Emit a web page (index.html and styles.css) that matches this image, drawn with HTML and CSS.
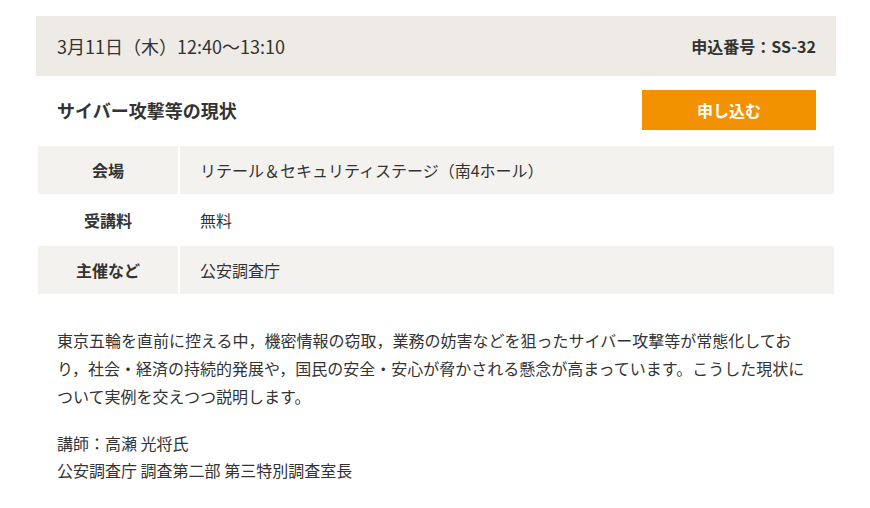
FILE: index.html
```html
<!DOCTYPE html>
<html lang="ja">
<head>
  <meta charset="UTF-8" />
  <meta name="viewport" content="width=device-width, initial-scale=1.0"/>
  <title>サイバー攻撃等の現状</title>
  <link rel="stylesheet" href="styles.css">
</head>
<body>

  <div class="session">
    <div class="session-head">
      <span class="session-time">3月11日（木）12:40～13:10</span>
      <span class="session-no">申込番号：SS-32</span>
    </div>

    <div class="session-title">
      <h2>サイバー攻撃等の現状</h2>
      <a class="apply" href="#">申し込む</a>
    </div>

    <table class="info">
      <tr class="shade">
        <th>会場</th>
        <td>リテール＆セキュリティステージ（南4ホール）</td>
      </tr>
      <tr>
        <th>受講料</th>
        <td>無料</td>
      </tr>
      <tr class="shade">
        <th>主催など</th>
        <td>公安調査庁</td>
      </tr>
    </table>

    <div class="desc">
      <p>東京五輪を直前に控える中，機密情報の窃取，業務の妨害などを狙ったサイバー攻撃等が常態化しており，社会・経済の持続的発展や，国民の安全・安心が脅かされる懸念が高まっています。こうした現状について実例を交えつつ説明します。</p>
      <p>講師：高瀬 光将氏<br>公安調査庁 調査第二部 第三特別調査室長</p>
    </div>
  </div>

</body>
</html>
```

FILE: styles.css
```css
body {
  margin: 0;
  background: #fff;
  color: #333;
  font-family: "Noto Sans CJK JP", "Noto Sans", sans-serif;
  font-size: 16px;
}

.session {
  width: 800px;
  margin: 16px 0 0 36px;
}

.session-head {
  display: flex;
  justify-content: space-between;
  align-items: center;
  height: 60px;
  padding: 0 20px 0 21px;
  background: #eeebe6;
}

.session-time {
  font-size: 18px;
}

.session-no {
  font-size: 16px;
  font-weight: 700;
}

.session-title {
  display: flex;
  justify-content: space-between;
  align-items: center;
  height: 68px;
  padding: 0 20px 0 21px;
}

.session-title h2 {
  margin: 0;
  font-size: 18px;
  font-weight: 700;
}

.apply {
  display: flex;
  align-items: center;
  justify-content: center;
  width: 174px;
  height: 40px;
  background: #f39200;
  color: #fff;
  font-weight: 700;
  text-decoration: none;
}

.info {
  width: 800px;
  border-spacing: 2px;
}

.info th,
.info td {
  height: 48px;
  padding: 0;
  font-size: 16px;
}

.info th {
  width: 140px;
  text-align: center;
  font-weight: 700;
}

.info td {
  padding-left: 20px;
}

.info .shade th,
.info .shade td {
  background: #f3f2ef;
}

.desc {
  padding: 30px 21px 0 21px;
}

.desc p {
  margin: 0 0 20px;
  line-height: 28px;
  font-size: 16px;
}

.desc p + p {
  line-height: 27px;
}
```
